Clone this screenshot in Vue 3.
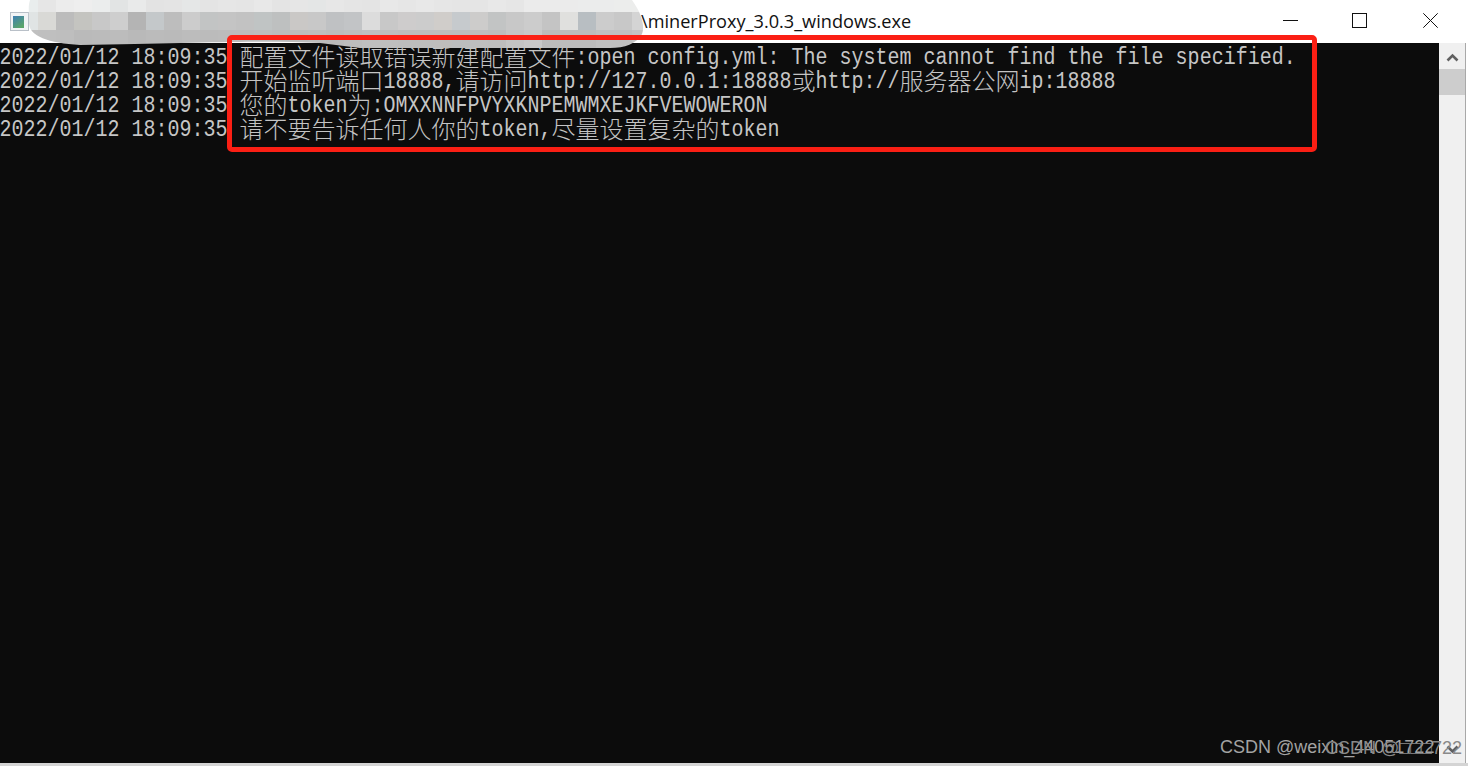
<script setup>
const CJK = /([\u3000-\u9fff]+)/

const stamp = '2022/01/12 18:09:35 '
const messages = [
  '配置文件读取错误新建配置文件:open config.yml: The system cannot find the file specified.',
  '开始监听端口18888,请访问http://127.0.0.1:18888或http://服务器公网ip:18888',
  '您的token为:OMXXNNFPVYXKNPEMWMXEJKFVEWOWERON',
  '请不要告诉任何人你的token,尽量设置复杂的token'
]

function segments(text) {
  return text.split(CJK).filter(Boolean).map((part) => ({
    text: part,
    cjk: CJK.test(part),
    width: part.length * (CJK.test(part) ? 24 : 12) + 'px'
  }))
}

const lines = messages.map((m) => segments(stamp + m))

const row1 = ['#e9eded','#e6e6e6','#ececec','#eeeeee','#ebeded','#e2e4e4','#e9eaea','#e3e3e3','#e4e4e4','#e5e7e7','#e4e4e4','#e6e6e6','#e5e5e5','#e8e8e8','#e4e4e4','#e6e6e6','#e4e6e6','#e7e7e7','#e5e5e5','#e4e4e4','#e8e8e8','#e6e6e6','#e8e8e8','#e6e6e6','#e5e5e5','#e5e5e5','#e8e8e8','#e6e6e6','#ebebeb','#ebebeb','#ebebeb','#ebecec','#ebecec','#ecedec','#ecedec']
const row2 = ['#e0e4e4','#d9d9d6','#bcbcbc','#c4c4c0','#c8c8c8','#cecece','#b4b4b4','#c4c8ca','#bdbdbd','#cccccc','#c2c4c4','#c4c4c4','#c2c2c2','#c0c4c4','#bec0c0','#cac8c6','#c8c8c8','#bfc1c3','#c2c4c6','#dcdcdc','#c8c8c8','#cecccc','#cccccc','#d0cdca','#c6cacd','#cdcccb','#c2c4c4','#c8c8c8','#cccccc','#c4c4c4','#e0e0de','#b8bec2','#cccccc','#c8c8c8','#d4d4d4']
const row3 = ['#c0c0c0','#bfbfbf','#bebebe','#bababa','#bbbbbb','#bcbcbc','#b9b9b9','#bbbbbb','#bababa','#bcbcbc','#bbbbbb','#bcbcbc','#bcbcbc','#bdbdbd','#bbbbbb','#bcbcbc','#bdbdbd','#bbbbbb','#bdbdbd','#bfbfbf','#bebebe','#bdbdbd','#bdbdbd','#bebdbc','#bcbdbe','#bebebe','#bdbdbd','#c4c4c4','#c8c8c8','#bbbbbb','#bcbcbc','#bcbcbc','#c0c0c0','#c0c0c0','#c4c4c4']
const mosaic = [...row1, ...row2, ...row3]
</script>

<template>
  <div class="window">
    <header class="titlebar">
      <svg class="appicon" width="19" height="19" viewBox="0 0 19 19">
        <defs>
          <linearGradient id="ico" x1="0" y1="0" x2="0.6" y2="1">
            <stop offset="0" stop-color="#3f7fb4" />
            <stop offset="1" stop-color="#5aa56a" />
          </linearGradient>
        </defs>
        <rect x="0.5" y="0.5" width="18" height="18" fill="#f2f4f6" stroke="#b9c0c8" />
        <rect x="3" y="4" width="11" height="12" fill="url(#ico)" />
      </svg>
      <span class="title">\minerProxy_3.0.3_windows.exe</span>
      <div class="controls">
        <svg class="ctl-min" width="15" height="15" viewBox="0 0 15 15"><path d="M0 7.5H15" stroke="#111" stroke-width="1" /></svg>
        <svg class="ctl-max" width="15" height="15" viewBox="0 0 15 15"><rect x="0.5" y="0.5" width="14" height="14" fill="none" stroke="#111" stroke-width="1" /></svg>
        <svg class="ctl-close" width="15" height="15" viewBox="0 0 15 15"><path d="M0.3 0.3L14.7 14.7M14.7 0.3L0.3 14.7" stroke="#111" stroke-width="1" /></svg>
      </div>
    </header>

    <main class="body">
      <section class="console">
        <div v-for="(line, i) in lines" :key="i" class="line">
          <span
            v-for="(seg, j) in line"
            :key="j"
            class="seg"
            :class="seg.cjk ? 'cjk' : 'latin'"
            :style="{ width: seg.width }"
          >{{ seg.text }}</span>
        </div>
      </section>
      <aside class="scrollbar">
        <svg width="13" height="9" viewBox="0 0 13 9"><path d="M1.5 7.5L6.5 2.5L11.5 7.5" fill="none" stroke="#606060" stroke-width="2.6" /></svg>
        <div class="thumb"></div>
        <div class="track"></div>
        <svg width="13" height="9" viewBox="0 0 13 9"><path d="M1.5 1.5L6.5 6.5L11.5 1.5" fill="none" stroke="#606060" stroke-width="2.6" /></svg>
      </aside>
      <div class="edge"></div>
    </main>

    <footer class="under">
      <span class="u1">minerProxy 技术 Input</span>
      <span class="u2">共享软件自动程序</span>
      <span class="u3">目前运行程序</span>
      <span class="u4">运行状态</span>
    </footer>

    <!-- overlays: blurred mosaic, annotation, watermarks -->
    <div class="mosaic">
      <i v-for="(c, i) in mosaic" :key="i" :style="{ background: c }"></i>
    </div>
    <div class="annotation"></div>
    <span class="mark mark-a">CSDN @weixin_44051722</span>
    <span class="mark mark-b">CSDN @□□□722</span>
  </div>
</template>

<style scoped>
.window {
  position: relative;
  width: 1468px;
  height: 766px;
  overflow: hidden;
  display: flex;
  flex-direction: column;
  background: #fff;
}

.titlebar {
  height: 43px;
  flex: none;
  display: flex;
  align-items: center;
  padding-left: 10px;
  background: #fff;
}
.appicon {
  flex: none;
}
.title {
  margin-left: 612px;
  font-family: "Open Sans", sans-serif;
  font-size: 18.15px;
  color: #111;
  white-space: nowrap;
  transform: translateY(-1px);
}
.controls {
  margin-left: auto;
  display: flex;
  align-items: center;
  padding-right: 30px;
  transform: translateY(-1px);
}
.ctl-min { margin-right: 54px; }
.ctl-max { margin-right: 56px; }

.body {
  flex: 1;
  display: flex;
  min-height: 0;
}
.console {
  flex: 1;
  background: #0c0c0c;
  padding-top: 1px;
  color: #cccccc;
}
.line {
  display: flex;
  height: 24px;
  white-space: pre;
}
.seg {
  display: block;
  flex: none;
  height: 24px;
  line-height: 24px;
}
.latin {
  font-family: "Liberation Mono", monospace;
  font-size: 23px;
  color: #c6c6c6;
  transform: translate(-0.5px, 2px) scaleX(0.8696);
  transform-origin: left center;
}
.cjk {
  font-family: "Noto Sans CJK SC", sans-serif;
  font-size: 24px;
  font-weight: 300;
  color: #c4c4c4;
  transform: translate(-0.5px, 0);
}

.scrollbar {
  width: 26px;
  flex: none;
  background: #f0f0f0;
  display: flex;
  flex-direction: column;
  align-items: center;
}
.scrollbar svg {
  flex: none;
  margin: 10px 0 7px;
}
.scrollbar svg:last-child {
  margin: 0 0 9px;
}
.thumb {
  width: 100%;
  height: 26px;
  flex: none;
  background: #cdcdcd;
}
.track {
  flex: 1;
}
.edge {
  width: 3px;
  flex: none;
  background: linear-gradient(90deg, #a8a8a8 0 1px, #ffffff 1px);
}

.under {
  height: 3px;
  flex: none;
  display: flex;
  overflow: hidden;
  background: #d4d4d4;
  font-family: "Noto Sans CJK SC", sans-serif;
  font-size: 15px;
  line-height: 20px;
  color: #222;
  white-space: nowrap;
}
.under span {
  flex: none;
}
.u1 { margin-left: 104px; }
.u2 { margin-left: 205px; }
.u3 { margin-left: 112px; }
.u4 { margin-left: 60px; }

.mosaic {
  position: absolute;
  left: 20px;
  top: 0;
  display: grid;
  grid-template-columns: repeat(35, 18px);
  grid-template-rows: 12px 18px 18px;
  clip-path: path("M10 0 L612 0 C622 14 625 26 622 34 C616 44 605 48 590 48 L340 48 L300 43 C240 40 180 43 60 45 C28 43 8 36 9 22 C9 10 8 6 10 0 Z");
}
.mosaic i {
  display: block;
}

.annotation {
  position: absolute;
  left: 227px;
  top: 35px;
  width: 1090px;
  height: 117px;
  box-sizing: border-box;
  border: 5px solid #fb1f14;
  border-radius: 5px;
}

.mark {
  position: absolute;
  top: 735px;
  font-family: "Liberation Sans", sans-serif;
  font-size: 18px;
  line-height: 24px;
  white-space: nowrap;
}
.mark-a {
  left: 1220px;
  color: #a3a3a3;
}
.mark-b {
  left: 1325px;
  color: #8a8a8a;
  top: 736px;
}
</style>
